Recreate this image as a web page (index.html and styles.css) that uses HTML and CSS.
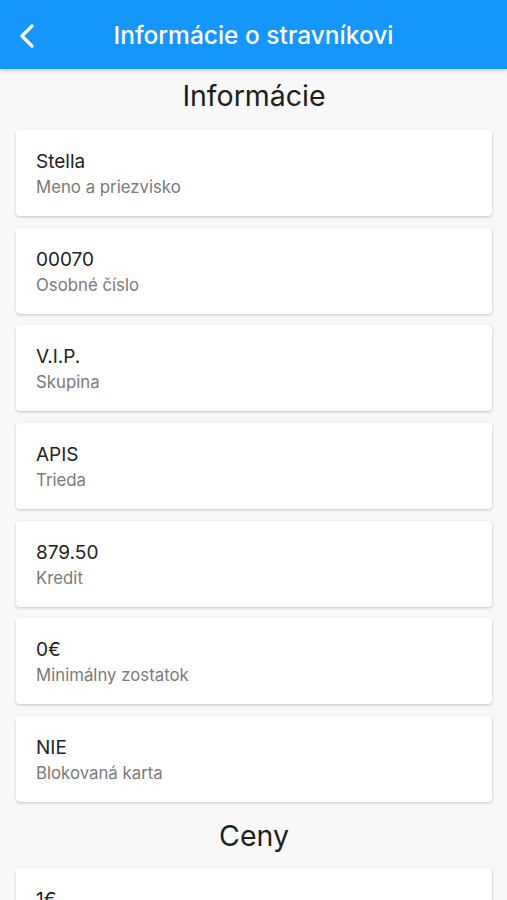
FILE: index.html
```html
<!DOCTYPE html>
<html>
<head>
<meta charset="utf-8">
<title>Informácie o stravníkovi</title>
<link rel="stylesheet" href="styles.css">
</head>
<body>
<header class="appbar">
  <a class="back" href="#">
    <svg width="16" height="24" viewBox="0 0 16 24"><path d="M13 2 L3 12 L13 22" fill="none" stroke="#fff" stroke-width="3.2" stroke-linecap="round" stroke-linejoin="round"/></svg>
  </a>
  <h1 class="appbar-title">Informácie o stravníkovi</h1>
</header>

<main class="content">
  <h2 class="section-title first">Informácie</h2>

  <div class="card">
    <div class="value">Stella</div>
    <div class="label">Meno a priezvisko</div>
  </div>
  <div class="card">
    <div class="value">00070</div>
    <div class="label">Osobné číslo</div>
  </div>
  <div class="card">
    <div class="value">V.I.P.</div>
    <div class="label">Skupina</div>
  </div>
  <div class="card">
    <div class="value">APIS</div>
    <div class="label">Trieda</div>
  </div>
  <div class="card">
    <div class="value">879.50</div>
    <div class="label">Kredit</div>
  </div>
  <div class="card">
    <div class="value">0€</div>
    <div class="label">Minimálny zostatok</div>
  </div>
  <div class="card">
    <div class="value">NIE</div>
    <div class="label">Blokovaná karta</div>
  </div>

  <h2 class="section-title">Ceny</h2>

  <div class="card">
    <div class="value">1€</div>
  </div>
</main>
</body>
</html>
```

FILE: styles.css
```css
body {
  margin: 0;
  background-color: #f8f8f8;
  font-family: "Inter", "Noto Sans", sans-serif;
  color: #222;
  overflow: hidden;
}

.appbar {
  height: 69px;
  background-color: #1496fa;
  display: flex;
  align-items: center;
  justify-content: center;
  position: relative;
  box-shadow: 0 1px 4px rgba(0,0,0,0.25);
}

.back {
  position: absolute;
  left: 19px;
  top: 24px;
  display: block;
  height: 24px;
}

.appbar-title {
  margin: 0;
  color: #fff;
  font-size: 24.5px;
  font-weight: 500;
}

.content {
  padding: 0 15px 0 16px;
}

.section-title {
  margin: 0 0 10px;
  line-height: 44px;
  text-align: center;
  font-size: 28.5px;
  font-weight: 400;
  color: #1e1e1e;
}

.section-title.first {
  margin-top: 5px;
  margin-bottom: 12px;
}

.card {
  background-color: #fff;
  border-radius: 4px;
  box-shadow: 0 1px 3px rgba(0,0,0,0.22);
  height: 86px;
  box-sizing: border-box;
  padding: 20px 20px 0;
  margin-bottom: 11.7px;
}

.value {
  font-size: 19px;
  line-height: 24px;
  color: #222;
}

.label {
  font-size: 16.8px;
  line-height: 26px;
  color: #7a7a7a;
}
```
